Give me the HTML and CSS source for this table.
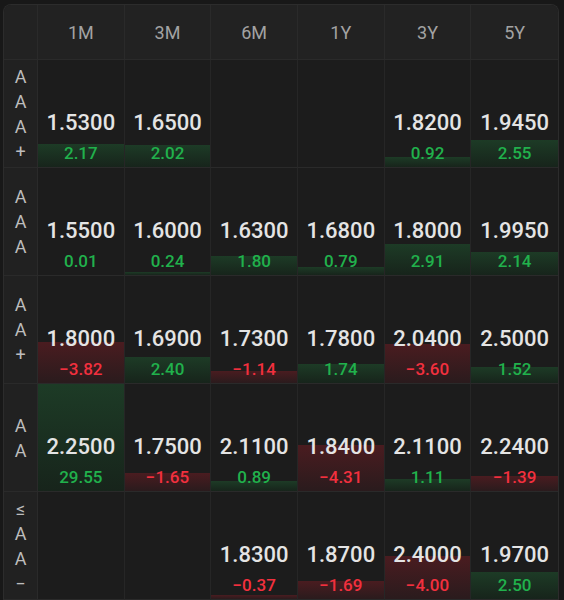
FILE: index.html
```html
<!DOCTYPE html>
<html>
<head>
<meta charset="utf-8">
<link rel="stylesheet" href="styles.css">
</head>
<body>
<div class="table">
  <div class="row head">
    <div class="side"></div>
    <div class="hcell">1M</div>
    <div class="hcell">3M</div>
    <div class="hcell">6M</div>
    <div class="hcell">1Y</div>
    <div class="hcell">3Y</div>
    <div class="hcell">5Y</div>
  </div>

  <div class="row">
    <div class="side"><span>A</span><span>A</span><span>A</span><span>+</span></div>
    <div class="cell"><div class="bar up" style="height:21.7%"></div><div class="val">1.5300</div><div class="chg up">2.17</div></div>
    <div class="cell"><div class="bar up" style="height:20.2%"></div><div class="val">1.6500</div><div class="chg up">2.02</div></div>
    <div class="cell"></div>
    <div class="cell"></div>
    <div class="cell"><div class="bar up" style="height:9.2%"></div><div class="val">1.8200</div><div class="chg up">0.92</div></div>
    <div class="cell"><div class="bar up" style="height:25.5%"></div><div class="val">1.9450</div><div class="chg up">2.55</div></div>
  </div>

  <div class="row">
    <div class="side"><span>A</span><span>A</span><span>A</span></div>
    <div class="cell"><div class="bar up" style="height:0.1%"></div><div class="val">1.5500</div><div class="chg up">0.01</div></div>
    <div class="cell"><div class="bar up" style="height:2.4%"></div><div class="val">1.6000</div><div class="chg up">0.24</div></div>
    <div class="cell"><div class="bar up" style="height:18%"></div><div class="val">1.6300</div><div class="chg up">1.80</div></div>
    <div class="cell"><div class="bar up" style="height:7.9%"></div><div class="val">1.6800</div><div class="chg up">0.79</div></div>
    <div class="cell"><div class="bar up" style="height:29.1%"></div><div class="val">1.8000</div><div class="chg up">2.91</div></div>
    <div class="cell"><div class="bar up" style="height:21.4%"></div><div class="val">1.9950</div><div class="chg up">2.14</div></div>
  </div>

  <div class="row">
    <div class="side"><span>A</span><span>A</span><span>+</span></div>
    <div class="cell"><div class="bar down" style="height:38.2%"></div><div class="val">1.8000</div><div class="chg down">−3.82</div></div>
    <div class="cell"><div class="bar up" style="height:24%"></div><div class="val">1.6900</div><div class="chg up">2.40</div></div>
    <div class="cell"><div class="bar down" style="height:11.4%"></div><div class="val">1.7300</div><div class="chg down">−1.14</div></div>
    <div class="cell"><div class="bar up" style="height:17.4%"></div><div class="val">1.7800</div><div class="chg up">1.74</div></div>
    <div class="cell"><div class="bar down" style="height:36%"></div><div class="val">2.0400</div><div class="chg down">−3.60</div></div>
    <div class="cell"><div class="bar up" style="height:15.2%"></div><div class="val">2.5000</div><div class="chg up">1.52</div></div>
  </div>

  <div class="row">
    <div class="side"><span>A</span><span>A</span></div>
    <div class="cell"><div class="bar up" style="height:100%"></div><div class="val">2.2500</div><div class="chg up">29.55</div></div>
    <div class="cell"><div class="bar down" style="height:16.5%"></div><div class="val">1.7500</div><div class="chg down">−1.65</div></div>
    <div class="cell"><div class="bar up" style="height:8.9%"></div><div class="val">2.1100</div><div class="chg up">0.89</div></div>
    <div class="cell"><div class="bar down" style="height:43.1%"></div><div class="val">1.8400</div><div class="chg down">−4.31</div></div>
    <div class="cell"><div class="bar up" style="height:11.1%"></div><div class="val">2.1100</div><div class="chg up">1.11</div></div>
    <div class="cell"><div class="bar down" style="height:13.9%"></div><div class="val">2.2400</div><div class="chg down">−1.39</div></div>
  </div>

  <div class="row">
    <div class="side"><span>≤</span><span>A</span><span>A</span><span>−</span></div>
    <div class="cell"></div>
    <div class="cell"></div>
    <div class="cell"><div class="bar down" style="height:3.7%"></div><div class="val">1.8300</div><div class="chg down">−0.37</div></div>
    <div class="cell"><div class="bar down" style="height:16.9%"></div><div class="val">1.8700</div><div class="chg down">−1.69</div></div>
    <div class="cell"><div class="bar down" style="height:40%"></div><div class="val">2.4000</div><div class="chg down">−4.00</div></div>
    <div class="cell"><div class="bar up" style="height:25%"></div><div class="val">1.9700</div><div class="chg up">2.50</div></div>
  </div>
</div>
</body>
</html>
```

FILE: styles.css
```css
html, body {
  margin: 0;
  padding: 0;
  background: #181818;
  font-family: Roboto, "Noto Sans", sans-serif;
  overflow: hidden;
}
body {
  padding: 4px 5px 0 3px;
}
.table {
  border: 1px solid #2c2c2c;
  border-bottom: none;
  border-radius: 8px 8px 0 0;
  overflow: hidden;
  background: #1c1c1c;
}
.row {
  display: grid;
  grid-template-columns: 34px repeat(6, 1fr);
  height: 108px;
}
.row.head {
  height: 55px;
  background: #222222;
}
.side {
  background: #212121;
  border-right: 1px solid #2a2a2a;
  border-bottom: 1px solid #2a2a2a;
  display: flex;
  flex-direction: column;
  align-items: center;
  justify-content: center;
  color: #bdbdbd;
  font-size: 18px;
  line-height: 25px;
}
.head .side {
  background: #222222;
}
.hcell {
  display: flex;
  align-items: center;
  justify-content: center;
  color: #a3a3a3;
  font-size: 18px;
  border-right: 1px solid #2a2a2a;
  border-bottom: 1px solid #2a2a2a;
}
.hcell:last-child, .cell:last-child {
  border-right: none;
}
.cell {
  position: relative;
  display: flex;
  flex-direction: column;
  align-items: center;
  justify-content: flex-end;
  padding-bottom: 4px;
  border-right: 1px solid #262626;
  border-bottom: 1px solid #2a2a2a;
}
.bar {
  position: absolute;
  left: 0;
  right: 0;
  bottom: 0;
}
.bar.up {
  background: linear-gradient(#1d3b26, #17241b);
}
.bar.down {
  background: linear-gradient(#4a1c20, #2a1b1d);
}
.val {
  position: relative;
  color: #e4e4e4;
  font-size: 22px;
  font-weight: 500;
  line-height: 28px;
}
.chg {
  position: relative;
  margin-top: 6px;
  font-size: 17px;
  font-weight: 500;
  line-height: 20px;
}
.chg.up {
  color: #21b14c;
}
.chg.down {
  color: #f2303e;
}
```
